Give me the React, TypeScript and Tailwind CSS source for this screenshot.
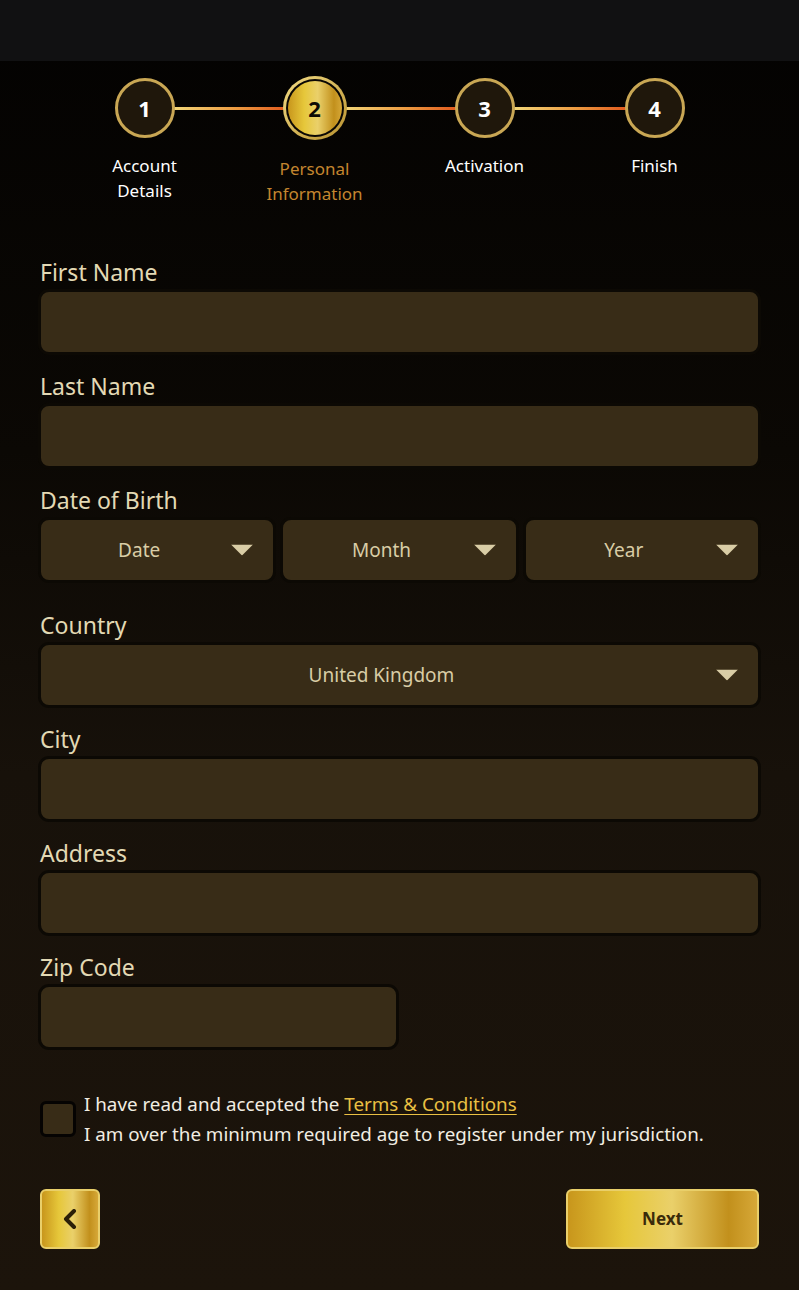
import React from "react";

const gold =
  "bg-[linear-gradient(90deg,#c8961c_0%,#e6c73a_30%,#ead06a_55%,#c2901c_85%,#d6a838_100%)]";

function Caret() {
  return (
    <svg width="22" height="11" viewBox="0 0 22 11" className="shrink-0">
      <polygon points="0,0 22,0 11,11" fill="#d9cda6" />
    </svg>
  );
}

function Label({ children }: { children: React.ReactNode }) {
  return <div className="pl-[2px] text-[23px] leading-[30px] text-[#e3d9b4] mb-[2px]">{children}</div>;
}

function Field({ label, half }: { label: string; half?: boolean }) {
  return (
    <div className="flex flex-col">
      <Label>{label}</Label>
      <div
        className={`h-[66px] rounded-[11px] bg-[#382c17] border-[3px] border-[#0c0904] ${
          half ? "w-[361px]" : "w-full"
        }`}
      />
    </div>
  );
}

function Select({ text, grow }: { text: string; grow?: boolean }) {
  return (
    <div
      className={`relative h-[66px] rounded-[11px] bg-[#382c17] border-[3px] border-[#0c0904] flex items-center ${
        grow ? "flex-1" : "w-full"
      }`}
    >
      <span className="flex-1 text-center text-[19px] text-[#d9cda6] pr-[36px]">{text}</span>
      <div className="absolute right-[20px] top-1/2 -translate-y-1/2 flex">
        <Caret />
      </div>
    </div>
  );
}

const steps = [
  { n: "1", label: ["Account", "Details"] },
  { n: "2", label: ["Personal", "Information"], active: true },
  { n: "3", label: ["Activation"] },
  { n: "4", label: ["Finish"] },
];

export default function App() {
  return (
    <div
      className="w-[799px] min-h-[1290px] flex flex-col bg-[linear-gradient(180deg,#030201_0%,#0b0804_35%,#17110a_60%,#1c140b_100%)]"
      style={{ fontFamily: '"Noto Sans", "Open Sans", sans-serif' }}
    >
      <div className="h-[61px] bg-[#111112]" />

      {/* Stepper */}
      <div className="w-[680px] mx-auto grid grid-cols-4 pt-[17px]">
        {steps.map((s, i) => (
          <div key={s.n} className="relative flex flex-col items-center">
            {i < 3 && (
              <div className="absolute top-[29px] left-[calc(50%+28px)] w-[116px] h-[3px] bg-[linear-gradient(90deg,#f2d77a_0%,#ec9a40_55%,#e0571c_100%)]" />
            )}
            {s.active ? (
              <div className="relative -mt-[2px] w-[64px] h-[64px] rounded-full p-[3px] bg-[linear-gradient(135deg,#f3dc85,#b8912e)]">
                <div className="w-full h-full rounded-full bg-[#0b0804] p-[2px]">
                  <div
                    className={`w-full h-full rounded-full ${gold} flex items-center justify-center text-[22px] font-bold text-[#0e0a04]`}
                  >
                    {s.n}
                  </div>
                </div>
              </div>
            ) : (
              <div className="relative w-[60px] h-[60px] rounded-full border-[3px] border-[#c9a754] bg-[#1f170b] flex items-center justify-center text-[22px] font-bold text-white">
                {s.n}
              </div>
            )}
            <div
              className={`text-center text-[17px] leading-[25px] ${
                s.active ? "text-[#c4862f] mt-[16px]" : "text-white mt-[15px]"
              }`}
            >
              {s.label.map((l) => (
                <div key={l}>{l}</div>
              ))}
            </div>
          </div>
        ))}
      </div>

      {/* Form */}
      <div className="px-[38px] pt-[51px] flex flex-col">
        <div className="flex flex-col gap-[16px]">
          <Field label="First Name" />
          <Field label="Last Name" />
          <div className="flex flex-col">
            <Label>Date of Birth</Label>
            <div className="flex gap-[4px]">
              <Select text="Date" grow />
              <Select text="Month" grow />
              <Select text="Year" grow />
            </div>
          </div>
        </div>
        <div className="flex flex-col gap-[16px] mt-[27px]">
          <div className="flex flex-col">
            <Label>Country</Label>
            <Select text="United Kingdom" />
          </div>
          <Field label="City" />
          <Field label="Address" />
          <Field label="Zip Code" half />
        </div>

        {/* Terms */}
        <div className="flex items-center gap-[8px] mt-[39px] pl-[2px]">
          <div className="w-[36px] h-[36px] rounded-[6px] bg-[#382c17] border-[3px] border-[#050302] shrink-0" />
          <div className="text-[18.8px] leading-[30px] text-[#f1ede2]">
            <div>
              I have read and accepted the{" "}
              <span className="text-[#eac043] underline underline-offset-[3px]">Terms &amp; Conditions</span>
            </div>
            <div>I am over the minimum required age to register under my jurisdiction.</div>
          </div>
        </div>

        {/* Buttons */}
        <div className="flex justify-between items-center mt-[40px] px-[2px]">
          <button
            className={`w-[60px] h-[60px] rounded-[6px] ${gold} border-2 border-[#e9cf6a] flex items-center justify-center`}
          >
            <svg width="14" height="20" viewBox="0 0 14 20">
              <path d="M11 2 L3 10 L11 18" stroke="#2b1f08" strokeWidth="4" fill="none" strokeLinecap="round" strokeLinejoin="round" />
            </svg>
          </button>
          <button
            className={`w-[193px] h-[60px] rounded-[6px] ${gold} border-2 border-[#e9cf6a] flex items-center justify-center text-[17px] font-bold text-[#3a2b0a]`}
          >
            Next
          </button>
        </div>
      </div>
    </div>
  );
}
